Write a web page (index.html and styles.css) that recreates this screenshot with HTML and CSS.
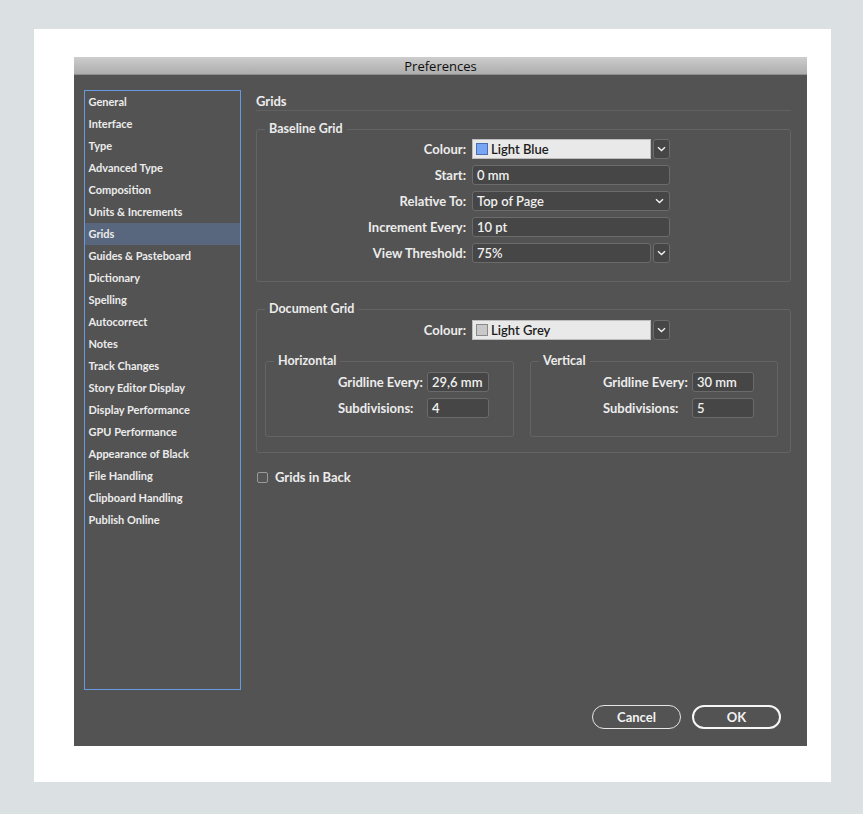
FILE: index.html
```html
<!DOCTYPE html>
<html>
<head>
<meta charset="utf-8">
<title>Preferences</title>
<link rel="stylesheet" href="styles.css">
</head>
<body>
<div class="panel">
  <div class="dialog">
    <div class="titlebar">Preferences</div>
    <div class="dialog-body">
      <ul class="sidebar">
        <li>General</li>
        <li>Interface</li>
        <li>Type</li>
        <li>Advanced Type</li>
        <li>Composition</li>
        <li>Units &amp; Increments</li>
        <li class="selected">Grids</li>
        <li>Guides &amp; Pasteboard</li>
        <li>Dictionary</li>
        <li>Spelling</li>
        <li>Autocorrect</li>
        <li>Notes</li>
        <li>Track Changes</li>
        <li>Story Editor Display</li>
        <li>Display Performance</li>
        <li>GPU Performance</li>
        <li>Appearance of Black</li>
        <li>File Handling</li>
        <li>Clipboard Handling</li>
        <li>Publish Online</li>
      </ul>
      <div class="main">
        <h2 class="page-title">Grids</h2>

        <fieldset class="group baseline">
          <legend>Baseline Grid</legend>
          <div class="form-grid">
            <label>Colour:</label>
            <div class="combo">
              <div class="combo-field"><span class="swatch blue"></span>Light Blue</div>
              <div class="combo-btn"><svg width="9" height="6" viewBox="0 0 9 6"><path d="M1 1.2 L4.5 4.5 L8 1.2" fill="none" stroke="#f2f2f2" stroke-width="1.4"/></svg></div>
            </div>
            <label>Start:</label>
            <div class="field">0 mm</div>
            <label>Relative To:</label>
            <div class="field select">Top of Page<svg width="9" height="6" viewBox="0 0 9 6"><path d="M1 1.2 L4.5 4.5 L8 1.2" fill="none" stroke="#f2f2f2" stroke-width="1.4"/></svg></div>
            <label>Increment Every:</label>
            <div class="field">10 pt</div>
            <label>View Threshold:</label>
            <div class="combo">
              <div class="field combo-dark">75%</div>
              <div class="combo-btn"><svg width="9" height="6" viewBox="0 0 9 6"><path d="M1 1.2 L4.5 4.5 L8 1.2" fill="none" stroke="#f2f2f2" stroke-width="1.4"/></svg></div>
            </div>
          </div>
        </fieldset>

        <fieldset class="group document">
          <legend>Document Grid</legend>
          <div class="form-grid">
            <label>Colour:</label>
            <div class="combo">
              <div class="combo-field"><span class="swatch grey"></span>Light Grey</div>
              <div class="combo-btn"><svg width="9" height="6" viewBox="0 0 9 6"><path d="M1 1.2 L4.5 4.5 L8 1.2" fill="none" stroke="#f2f2f2" stroke-width="1.4"/></svg></div>
            </div>
          </div>
          <div class="sub-groups">
            <fieldset class="group sub">
              <legend>Horizontal</legend>
              <div class="sub-grid">
                <label>Gridline Every:</label>
                <div class="field small">29,6 mm</div>
                <label>Subdivisions:</label>
                <div class="field small">4</div>
              </div>
            </fieldset>
            <fieldset class="group sub">
              <legend>Vertical</legend>
              <div class="sub-grid">
                <label>Gridline Every:</label>
                <div class="field small">30 mm</div>
                <label>Subdivisions:</label>
                <div class="field small">5</div>
              </div>
            </fieldset>
          </div>
        </fieldset>

        <div class="check-row">
          <span class="checkbox"></span>
          <span>Grids in Back</span>
        </div>
      </div>
    </div>
    <div class="footer">
      <button class="btn">Cancel</button>
      <button class="btn primary">OK</button>
    </div>
  </div>
</div>
</body>
</html>
```

FILE: styles.css
```css
* { box-sizing: border-box; }

html, body {
  margin: 0;
  padding: 0;
}

body {
  background: #dbe1e3;
  padding: 29px 0 0 34px;
  width: 863px;
  height: 814px;
  font-family: Lato, "Open Sans", sans-serif;
  font-weight: 700;
  color: #ececec;
}

.panel {
  width: 797px;
  height: 753px;
  background: #ffffff;
  padding: 28px 24px 36px 40px;
}

.dialog {
  width: 733px;
  height: 689px;
  background: #535353;
  display: flex;
  flex-direction: column;
}

.titlebar {
  height: 18px;
  line-height: 18px;
  text-align: center;
  font-family: "Open Sans", Lato, sans-serif;
  font-weight: 500;
  font-size: 13px;
  color: #0e0e0e;
  background: linear-gradient(#cdcdcd, #adadad);
  border-bottom: 1px solid #8e8e8e;
}

.dialog-body {
  display: flex;
  gap: 15px;
  padding: 15px 16px 0 10px;
}

.sidebar {
  list-style: none;
  margin: 0;
  padding: 0;
  width: 157px;
  height: 600px;
  border: 1.5px solid #6699e0;
  font-size: 11px;
}

.sidebar li {
  height: 22px;
  line-height: 21px;
  padding-left: 3.5px;
  white-space: nowrap;
}

.sidebar li.selected {
  background: #58677d;
}

.main {
  flex: 1;
  display: flex;
  flex-direction: column;
}

.page-title {
  margin: 0;
  font-size: 13px;
  font-weight: 700;
  padding-top: 2px;
  line-height: 19px;
  height: 21px;
  border-bottom: 1px solid #616161;
}

.group {
  margin: 10px 0 0 0;
  border: 1px solid #646464;
  border-radius: 3px;
  padding: 2px 8px 18px 8px;
  min-width: 0;
}

.group legend {
  padding: 0 4px;
  font-size: 12.5px;
  line-height: 16px;
  font-weight: 700;
}

.document {
  margin-top: 19px;
  padding-top: 3px;
  padding-bottom: 15px;
}

.form-grid {
  display: grid;
  grid-template-columns: 201px 198px;
  grid-auto-rows: 20px;
  column-gap: 6px;
  row-gap: 6px;
  font-size: 13px;
}

.form-grid label {
  text-align: right;
  line-height: 20px;
  white-space: nowrap;
}

.field {
  height: 20px;
  line-height: 18px;
  background: #464646;
  border: 1px solid #6b6b6b;
  border-radius: 3px;
  padding: 0 4px;
  font-size: 13px;
  font-weight: 600;
  color: #f0f0f0;
  white-space: nowrap;
}

.field.select {
  display: flex;
  align-items: center;
  justify-content: space-between;
  padding-right: 5px;
}

.combo {
  display: flex;
  gap: 2px;
}

.combo-field {
  flex: 1;
  height: 20px;
  background: #e9e9e9;
  border: 1px solid #bdbdbd;
  color: #1c1c1c;
  font-size: 13px;
  font-weight: 600;
  line-height: 18px;
  padding: 0 3px;
  display: flex;
  align-items: center;
  gap: 3px;
}

.combo-dark {
  flex: 1;
}

.combo-btn {
  width: 17px;
  height: 20px;
  background: #464646;
  border: 1px solid #6b6b6b;
  border-radius: 3px;
  display: flex;
  align-items: center;
  justify-content: center;
}

.swatch {
  width: 12px;
  height: 12px;
  display: inline-block;
  flex: none;
}

.swatch.blue {
  background: #78a6f5;
  border: 1px solid #4a6fb0;
}

.swatch.grey {
  background: #c9c9c9;
  border: 1px solid #8a8a8a;
}

.sub-groups {
  display: grid;
  grid-template-columns: 249px 248px;
  column-gap: 16px;
  margin-top: 13px;
}

.group.sub {
  margin: 0;
  padding: 3px 8px 18px 8px;
}

.sub-grid {
  display: grid;
  grid-template-columns: 89px 62px;
  grid-auto-rows: 20px;
  row-gap: 6px;
  padding-left: 64px;
  font-size: 13px;
}

.sub-grid label {
  line-height: 20px;
  white-space: nowrap;
}

.check-row {
  margin-top: 18px;
  display: flex;
  align-items: center;
  gap: 7px;
  font-size: 13px;
  line-height: 13px;
  padding-left: 1px;
}

.checkbox {
  width: 11px;
  height: 11px;
  border: 1px solid #9a9a9a;
  border-radius: 2px;
  background: #555555;
}

.footer {
  display: flex;
  justify-content: flex-end;
  gap: 11px;
  padding: 15px 26px 17px 0;
  margin-top: auto;
}

.btn {
  width: 89px;
  height: 24px;
  border-radius: 12px;
  background: #535353;
  border: 1.5px solid #e6e6e6;
  color: #f2f2f2;
  font-family: Lato, "Open Sans", sans-serif;
  font-weight: 700;
  font-size: 13px;
  padding: 0;
}

.btn.primary {
  border: 2px solid #f6f6f6;
}
```
